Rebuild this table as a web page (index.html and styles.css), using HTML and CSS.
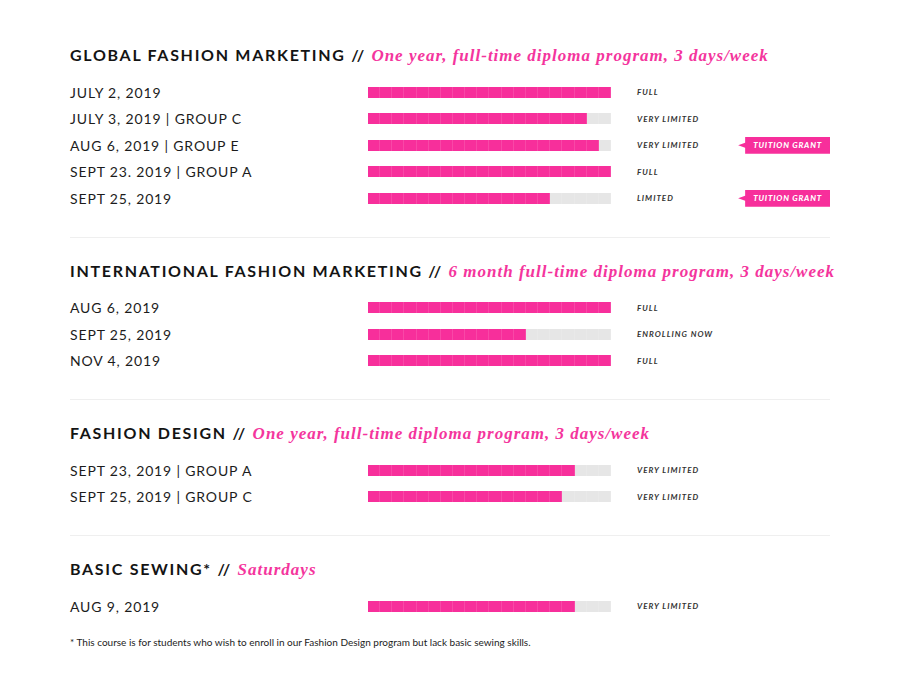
FILE: index.html
```html
<!DOCTYPE html>
<html>
<head>
<link rel="stylesheet" href="styles.css">
</head>
<body>
<div class="page">

  <div class="section">
    <h2>GLOBAL FASHION MARKETING // <em>One year, full-time diploma program, 3 days/week</em></h2>
    <div class="row">
      <span class="date">JULY 2, 2019</span>
      <div class="bar"><div class="fill" style="width: 100%"></div></div>
      <span class="status">FULL</span>
    </div>
    <div class="row">
      <span class="date">JULY 3, 2019 | GROUP C</span>
      <div class="bar"><div class="fill" style="width: 90%"></div></div>
      <span class="status">VERY LIMITED</span>
    </div>
    <div class="row">
      <span class="date">AUG 6, 2019 | GROUP E</span>
      <div class="bar"><div class="fill" style="width: 95%"></div></div>
      <span class="status">VERY LIMITED</span>
      <span class="grant">TUITION GRANT</span>
    </div>
    <div class="row">
      <span class="date">SEPT 23. 2019 | GROUP A</span>
      <div class="bar"><div class="fill" style="width: 100%"></div></div>
      <span class="status">FULL</span>
    </div>
    <div class="row">
      <span class="date">SEPT 25, 2019</span>
      <div class="bar"><div class="fill" style="width: 75%"></div></div>
      <span class="status">LIMITED</span>
      <span class="grant">TUITION GRANT</span>
    </div>
  </div>

  <div class="section">
    <h2>INTERNATIONAL FASHION MARKETING // <em>6 month full-time diploma program, 3 days/week</em></h2>
    <div class="row">
      <span class="date">AUG 6, 2019</span>
      <div class="bar"><div class="fill" style="width: 100%"></div></div>
      <span class="status">FULL</span>
    </div>
    <div class="row">
      <span class="date">SEPT 25, 2019</span>
      <div class="bar"><div class="fill" style="width: 65%"></div></div>
      <span class="status">ENROLLING NOW</span>
    </div>
    <div class="row">
      <span class="date">NOV 4, 2019</span>
      <div class="bar"><div class="fill" style="width: 100%"></div></div>
      <span class="status">FULL</span>
    </div>
  </div>

  <div class="section">
    <h2>FASHION DESIGN // <em>One year, full-time diploma program, 3 days/week</em></h2>
    <div class="row">
      <span class="date">SEPT 23, 2019 | GROUP A</span>
      <div class="bar"><div class="fill" style="width: 85%"></div></div>
      <span class="status">VERY LIMITED</span>
    </div>
    <div class="row">
      <span class="date">SEPT 25, 2019 | GROUP C</span>
      <div class="bar"><div class="fill" style="width: 80%"></div></div>
      <span class="status">VERY LIMITED</span>
    </div>
  </div>

  <div class="section last">
    <h2>BASIC SEWING* // <em>Saturdays</em></h2>
    <div class="row">
      <span class="date">AUG 9, 2019</span>
      <div class="bar"><div class="fill" style="width: 85%"></div></div>
      <span class="status">VERY LIMITED</span>
    </div>
  </div>

  <p class="note">* This course is for students who wish to enroll in our Fashion Design program but lack basic sewing skills.</p>

</div>
</body>
</html>
```

FILE: styles.css
```css
body {
  margin: 0;
  background-color: #ffffff;
  color: #1c1c1c;
  font-family: Lato, "Open Sans", sans-serif;
}

.page {
  width: 760px;
  margin: 0 0 0 70px;
  padding-top: 45px;
}

.section {
  padding: 23px 0 25px;
  border-bottom: 1px solid #efefef;
}
.section:first-child {
  padding-top: 0;
}
.section.last {
  border-bottom: none;
  padding-bottom: 16px;
}

h2 {
  margin: 0 0 13px;
  font-size: 16px;
  line-height: 20px;
  font-weight: 700;
  letter-spacing: 1.7px;
  color: #141414;
  white-space: nowrap;
}
h2 em {
  font-family: "Liberation Serif", "DejaVu Serif", serif;
  font-style: italic;
  font-weight: 700;
  font-size: 17px;
  letter-spacing: 1px;
  color: #f4359d;
}

.row {
  display: flex;
  align-items: center;
  height: 26.5px;
}

.date {
  width: 298px;
  flex: none;
  font-size: 14px;
  letter-spacing: 0.85px;
  color: #1c1c1c;
}

/* capacity bar, 20 cells */
.bar {
  position: relative;
  width: 243px;
  height: 11px;
  flex: none;
  background: #e6e6e6;
}
.fill {
  height: 100%;
  background: #f72f9b;
}
.bar::after {
  content: "";
  position: absolute;
  inset: 0;
  background: repeating-linear-gradient(to right, transparent 0 11.15px, rgba(255, 255, 255, 0.12) 11.15px 12.15px);
}

.status {
  margin-left: 26px;
  font-size: 8px;
  font-style: italic;
  font-weight: 700;
  letter-spacing: 1px;
  color: #333;
}

.grant {
  margin-left: auto;
  height: 17px;
  line-height: 17px;
  padding: 0 8px 0 15px;
  background: #f72f9b;
  color: #fff;
  font-size: 8px;
  font-style: italic;
  font-weight: 900;
  letter-spacing: 0.8px;
  clip-path: polygon(7px 0, 100% 0, 100% 100%, 7px 100%, 7px 11px, 0 8.5px, 7px 6px);
}

.note {
  margin: 0;
  font-size: 10px;
  line-height: 12px;
  color: #1c1c1c;
}
```
